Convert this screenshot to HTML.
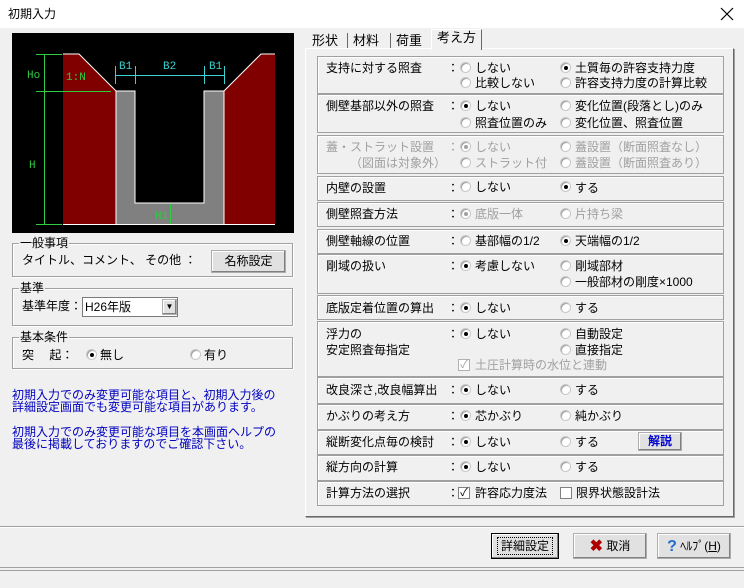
<!DOCTYPE html>
<html><head><meta charset="utf-8"><style>
*{margin:0;padding:0;box-sizing:border-box}
body{width:744px;height:588px;background:#f0f0f0;font-family:"Liberation Sans","Noto Sans CJK JP",sans-serif;font-size:12px;color:#000;position:relative;overflow:hidden}
.a{position:absolute;white-space:nowrap;line-height:14px}
.grp{position:absolute;border:1px solid #a0a0a0;box-shadow:inset 1px 1px 0 #fff,1px 1px 0 #fff}
.gl{position:absolute;background:#f0f0f0;padding:0 1px;line-height:14px;top:-8px;left:6px;font-size:12px}
.row{position:absolute;left:317px;width:407px;border:1px solid #a0a0a0;box-shadow:inset 1px 1px 0 #fff}
.rb{position:absolute;width:11px;height:11px;border-radius:50%;background:#fff;border:1px solid #c8c8c8;box-shadow:inset 1px 1px 0 #a0a0a0}
.rb.on::after{content:"";position:absolute;left:3px;top:3px;width:4px;height:4px;border-radius:50%;background:#000}
.dis{color:#a0a0a0}
.dis .rb.on::after{background:#a0a0a0}
.btn{position:absolute;background:#e1e1e1;border:1px solid #adadad;box-shadow:inset -1px -1px 0 #808080,inset 1px 1px 0 #fff;text-align:center;font-size:12px}
.cb{position:absolute;width:12px;height:12px;background:#fff;border:1px solid #808080;font-size:11px;line-height:10px;text-align:center}
</style></head><body>
<div style="position:absolute;left:0;top:0;width:744px;height:28px;background:#fff"></div>
<div class="a" style="left:8px;top:7px;font-size:12px">初期入力</div>
<svg style="position:absolute;left:719px;top:6px" width="16" height="16"><path d="M2 2L14 14M14 2L2 14" stroke="#000" stroke-width="1.2"/></svg>

<svg style="position:absolute;left:12px;top:33px" width="282" height="200" viewBox="12 33 282 200">
<rect x="12" y="33" width="282" height="200" fill="#000"/>
<polygon points="63,54 79,54 116,91 116,224 63,224" fill="#800000"/>
<polygon points="224,91 261,54 275,54 275,224 224,224" fill="#800000"/>
<polygon points="116,91 135,91 135,203 204,203 204,91 224,91 224,224 116,224" fill="#808080"/>
<polyline points="63,54 79,54 116,91 135,91 135,203 204,203 204,91 224,91 261,54 275,54" fill="none" stroke="#fff"/>
<line x1="116" y1="91" x2="116" y2="224" stroke="#fff"/><line x1="224" y1="91" x2="224" y2="224" stroke="#fff"/>
<line x1="63" y1="224.5" x2="275" y2="224.5" stroke="#fff"/>
<g stroke="#2ecc40">
<line x1="44.5" y1="54" x2="44.5" y2="224"/>
<line x1="36" y1="54.5" x2="62" y2="54.5"/><line x1="36" y1="91.5" x2="111" y2="91.5"/><line x1="36" y1="224.5" x2="62" y2="224.5"/>
<line x1="170.5" y1="204" x2="170.5" y2="224"/></g>
<g stroke="#3cd0d0"><line x1="115" y1="75.5" x2="224" y2="75.5"/>
<line x1="115.5" y1="66" x2="115.5" y2="84"/><line x1="135.5" y1="66" x2="135.5" y2="84"/><line x1="204.5" y1="66" x2="204.5" y2="84"/><line x1="224.5" y1="66" x2="224.5" y2="84"/></g>
<g font-family="Liberation Mono,monospace" font-size="11" fill="#2ecc40"><text x="27" y="78">Ho</text><text x="66" y="80">1:N</text><text x="29" y="168">H</text><text x="155" y="219">H1</text></g>
<g font-family="Liberation Mono,monospace" font-size="11" fill="#3cd0d0"><text x="119" y="69">B1</text><text x="163" y="69">B2</text><text x="209" y="69">B1</text></g>
</svg>

<div class="grp" style="left:12px;top:243px;width:281px;height:34px"><span class="gl">一般事項</span></div>
<div class="a" style="left:22px;top:253px">タイトル、コメント、 その他 ：</div>
<div class="btn" style="left:211px;top:250px;width:75px;height:23px;line-height:21px">名称設定</div>

<div class="grp" style="left:12px;top:288px;width:281px;height:38px"><span class="gl">基準</span></div>
<div class="a" style="left:22px;top:299px">基準年度：</div>
<div style="position:absolute;left:82px;top:297px;width:96px;height:20px;background:#fff;border:1px solid #7a7a7a"></div>
<div class="a" style="left:85px;top:300px">H26年版</div>
<div class="btn" style="left:162px;top:299px;width:15px;height:16px;font-size:8px;line-height:14px">▼</div>

<div class="grp" style="left:12px;top:337px;width:281px;height:32px"><span class="gl">基本条件</span></div>
<div class="a" style="left:22px;top:348px">突　 起：</div>
<div class="rb on" style="left:86px;top:349px"></div><div class="a" style="left:100px;top:348px">無し</div>
<div class="rb" style="left:190px;top:349px"></div><div class="a" style="left:204px;top:348px">有り</div>

<div class="a" style="left:12px;top:389px;color:#0000c0;line-height:12px">初期入力でのみ変更可能な項目と、初期入力後の<br>詳細設定画面でも変更可能な項目があります。</div>
<div class="a" style="left:12px;top:426px;color:#0000c0;line-height:12px">初期入力でのみ変更可能な項目を本画面ヘルプの<br>最後に掲載しておりますのでご確認下さい。</div>

<div style="position:absolute;left:305px;top:48px;width:429px;height:469px;border:1px solid #fff;border-right-color:#696969;border-bottom-color:#696969;box-shadow:1px 1px 0 #a0a0a0"></div>
<div class="a" style="left:312px;top:34px;font-size:13px">形状</div>
<div style="position:absolute;left:347px;top:33px;width:1px;height:15px;background:#696969"></div>
<div class="a" style="left:353px;top:34px;font-size:13px">材料</div>
<div style="position:absolute;left:390px;top:33px;width:1px;height:15px;background:#696969"></div>
<div class="a" style="left:396px;top:34px;font-size:13px">荷重</div>
<div style="position:absolute;left:431px;top:29px;width:51px;height:21px;background:#f0f0f0;border:1px solid #fff;border-bottom:none;border-right:1px solid #696969"></div>
<div class="a" style="left:437px;top:31px;font-size:13px">考え方</div>

<div class="row" style="top:56px;height:38px"></div>
<div class="row" style="top:94px;height:39px"></div>
<div class="row" style="top:135px;height:39px"></div>
<div class="row" style="top:176px;height:25px"></div>
<div class="row" style="top:202px;height:25px"></div>
<div class="row" style="top:229px;height:25px"></div>
<div class="row" style="top:254px;height:40px"></div>
<div class="row" style="top:295px;height:25px"></div>
<div class="row" style="top:321px;height:56px"></div>
<div class="row" style="top:377px;height:27px"></div>
<div class="row" style="top:404px;height:26px"></div>
<div class="row" style="top:430px;height:25px"></div>
<div class="row" style="top:455px;height:26px"></div>
<div class="row" style="top:481px;height:25px"></div>

<div>
<div class="a" style="left:326px;top:61px">支持に対する照査</div><div class="a" style="left:447px;top:61px">：</div>
<div class="rb" style="left:460px;top:62px"></div><div class="a" style="left:475px;top:61px">しない</div>
<div class="rb on" style="left:560px;top:62px"></div><div class="a" style="left:575px;top:61px">土質毎の許容支持力度</div>
<div class="rb" style="left:460px;top:77px"></div><div class="a" style="left:475px;top:76px">比較しない</div>
<div class="rb" style="left:560px;top:77px"></div><div class="a" style="left:575px;top:76px">許容支持力度の計算比較</div>

<div class="a" style="left:326px;top:99px">側壁基部以外の照査</div><div class="a" style="left:447px;top:99px">：</div>
<div class="rb on" style="left:460px;top:100px"></div><div class="a" style="left:475px;top:99px">しない</div>
<div class="rb" style="left:560px;top:100px"></div><div class="a" style="left:575px;top:99px">変化位置(段落とし)のみ</div>
<div class="rb" style="left:460px;top:117px"></div><div class="a" style="left:475px;top:116px">照査位置のみ</div>
<div class="rb" style="left:560px;top:117px"></div><div class="a" style="left:575px;top:116px">変化位置、照査位置</div>

<div class="dis">
<div class="a" style="left:326px;top:140px">蓋・ストラット設置</div><div class="a" style="left:447px;top:140px">：</div>
<div class="a" style="left:350px;top:156px">（図面は対象外）</div>
<div class="rb on" style="left:460px;top:141px"></div><div class="a" style="left:475px;top:140px">しない</div>
<div class="rb" style="left:560px;top:141px"></div><div class="a" style="left:575px;top:140px">蓋設置（断面照査なし）</div>
<div class="rb" style="left:460px;top:157px"></div><div class="a" style="left:475px;top:156px">ストラット付</div>
<div class="rb" style="left:560px;top:157px"></div><div class="a" style="left:575px;top:156px">蓋設置（断面照査あり）</div>
</div>

<div class="a" style="left:326px;top:181px">内壁の設置</div><div class="a" style="left:447px;top:181px">：</div>
<div class="rb" style="left:460px;top:181px"></div><div class="a" style="left:475px;top:180px">しない</div>
<div class="rb on" style="left:560px;top:181px"></div><div class="a" style="left:575px;top:181px">する</div>

<div class="a" style="left:326px;top:207px">側壁照査方法</div><div class="a" style="left:447px;top:207px">：</div>
<div class="dis"><div class="rb on" style="left:460px;top:208px"></div><div class="a" style="left:475px;top:207px">底版一体</div>
<div class="rb" style="left:560px;top:208px"></div><div class="a" style="left:575px;top:207px">片持ち梁</div></div>

<div class="a" style="left:326px;top:234px">側壁軸線の位置</div><div class="a" style="left:447px;top:234px">：</div>
<div class="rb" style="left:460px;top:235px"></div><div class="a" style="left:475px;top:234px">基部幅の1/2</div>
<div class="rb on" style="left:560px;top:235px"></div><div class="a" style="left:575px;top:234px">天端幅の1/2</div>

<div class="a" style="left:326px;top:259px">剛域の扱い</div><div class="a" style="left:447px;top:259px">：</div>
<div class="rb on" style="left:460px;top:260px"></div><div class="a" style="left:475px;top:259px">考慮しない</div>
<div class="rb" style="left:560px;top:260px"></div><div class="a" style="left:575px;top:259px">剛域部材</div>
<div class="rb" style="left:560px;top:276px"></div><div class="a" style="left:575px;top:275px">一般部材の剛度×1000</div>

<div class="a" style="left:326px;top:301px">底版定着位置の算出</div><div class="a" style="left:447px;top:301px">：</div>
<div class="rb on" style="left:460px;top:302px"></div><div class="a" style="left:475px;top:301px">しない</div>
<div class="rb" style="left:560px;top:302px"></div><div class="a" style="left:575px;top:301px">する</div>

<div class="a" style="left:326px;top:327px">浮力の</div><div class="a" style="left:326px;top:343px">安定照査毎指定</div><div class="a" style="left:447px;top:327px">：</div>
<div class="rb on" style="left:460px;top:328px"></div><div class="a" style="left:475px;top:327px">しない</div>
<div class="rb" style="left:560px;top:328px"></div><div class="a" style="left:575px;top:327px">自動設定</div>
<div class="rb" style="left:560px;top:344px"></div><div class="a" style="left:575px;top:343px">直接指定</div>
<div class="cb" style="left:458px;top:359px;border-color:#b0b0b0;color:#a0a0a0">✓</div><div class="a dis" style="left:475px;top:358px">土圧計算時の水位と連動</div>

<div class="a" style="left:326px;top:383px">改良深さ,改良幅算出</div><div class="a" style="left:447px;top:383px">：</div>
<div class="rb on" style="left:460px;top:384px"></div><div class="a" style="left:475px;top:383px">しない</div>
<div class="rb" style="left:560px;top:384px"></div><div class="a" style="left:575px;top:383px">する</div>

<div class="a" style="left:326px;top:409px">かぶりの考え方</div><div class="a" style="left:447px;top:409px">：</div>
<div class="rb on" style="left:460px;top:410px"></div><div class="a" style="left:475px;top:409px">芯かぶり</div>
<div class="rb" style="left:560px;top:410px"></div><div class="a" style="left:575px;top:409px">純かぶり</div>

<div class="a" style="left:326px;top:435px">縦断変化点毎の検討</div><div class="a" style="left:447px;top:435px">：</div>
<div class="rb on" style="left:460px;top:436px"></div><div class="a" style="left:475px;top:435px">しない</div>
<div class="rb" style="left:560px;top:436px"></div><div class="a" style="left:575px;top:435px">する</div>
<div class="btn" style="left:638px;top:432px;width:44px;height:19px;line-height:17px;color:#0000d0;font-weight:bold">解説</div>

<div class="a" style="left:326px;top:460px">縦方向の計算</div><div class="a" style="left:447px;top:460px">：</div>
<div class="rb on" style="left:460px;top:461px"></div><div class="a" style="left:475px;top:460px">しない</div>
<div class="rb" style="left:560px;top:461px"></div><div class="a" style="left:575px;top:460px">する</div>

<div class="a" style="left:326px;top:486px">計算方法の選択</div><div class="a" style="left:447px;top:486px">：</div>
<div class="cb" style="left:458px;top:487px">✓</div><div class="a" style="left:475px;top:486px">許容応力度法</div>
<div class="cb" style="left:560px;top:487px"></div><div class="a" style="left:576px;top:486px">限界状態設計法</div>
</div>

<div style="position:absolute;left:0;top:526px;width:744px;height:1px;background:#a0a0a0"></div>
<div style="position:absolute;left:0;top:527px;width:744px;height:1px;background:#fff"></div>
<div class="btn" style="left:491px;top:533px;width:68px;height:26px;line-height:24px;border:1px solid #000"><span style="border:1px dotted #000;padding:1px 3px">詳細設定</span></div>
<div class="btn" style="left:573px;top:533px;width:74px;height:26px;line-height:24px"><span style="color:#b00000;font-weight:bold;font-size:16px;vertical-align:-1px">✖</span> 取消</div>
<div class="btn" style="left:657px;top:533px;width:74px;height:26px;line-height:24px"><span style="color:#1e6fd0;font-weight:bold;font-size:16px;vertical-align:-1px">?</span> ﾍﾙﾌﾟ(<u>H</u>)</div>
<div style="position:absolute;left:0;top:567px;width:744px;height:1px;background:#a0a0a0"></div>
<div style="position:absolute;left:0;top:570px;width:744px;height:1px;background:#a0a0a0"></div>
</body></html>
